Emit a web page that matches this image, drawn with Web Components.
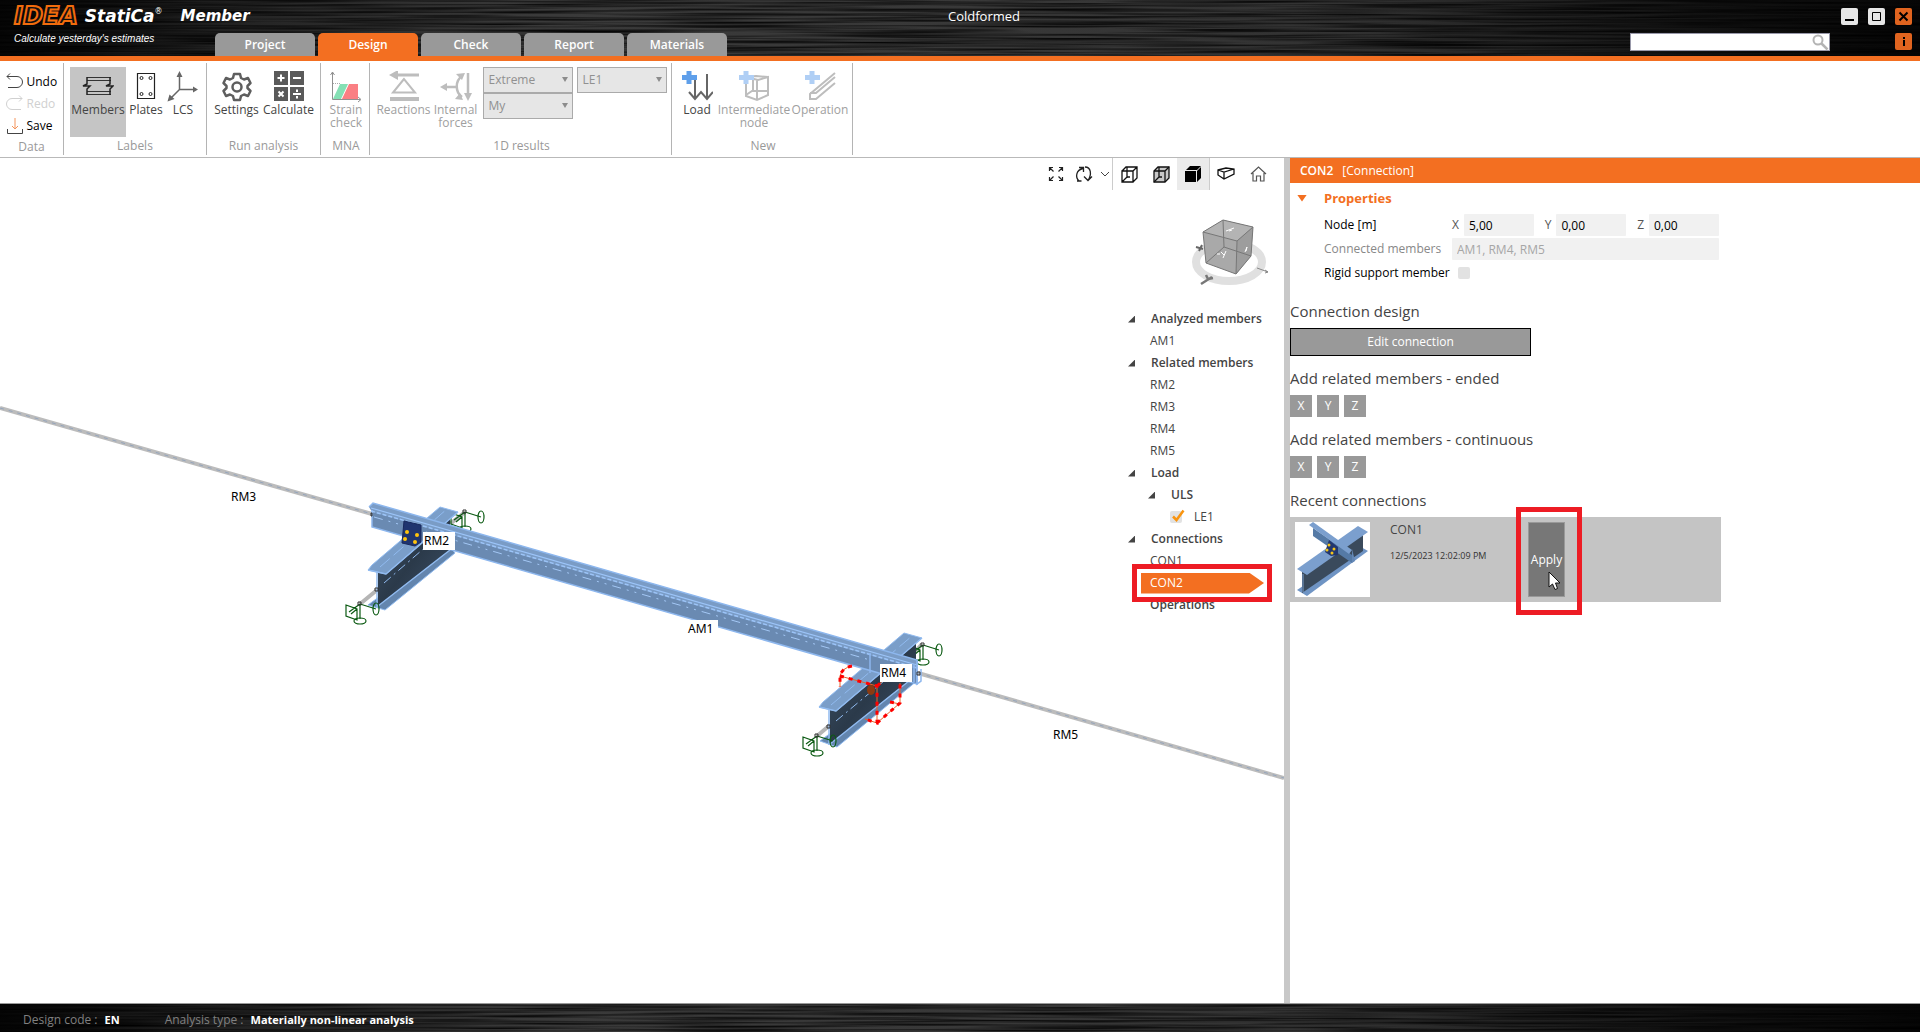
<!DOCTYPE html>
<html lang="en">
<head>
<meta charset="utf-8">
<title>IDEA StatiCa Member - Coldformed</title>
<style>
  html, body { height: 100%; }
  body { margin: 0; background: #fff; color: #444; font: 12px/16px "Open Sans", "Noto Sans", sans-serif; }
</style>
</head>
<body>
<member-app></member-app>

<script>
const define = (name, html, setup) => {
  const template = document.createElement('template');
  template.innerHTML = '<style>*{box-sizing:border-box}button,input,select{font:inherit;color:inherit;margin:0;padding:0;border:0;background:none;border-radius:0}button{cursor:pointer}</style>' + html;
  customElements.define(name, class extends HTMLElement {
    constructor() {
      super();
      this.attachShadow({ mode: 'open' }).append(template.content.cloneNode(true));
    }
    connectedCallback() { if (setup) setup(this, this.shadowRoot); }
  });
};

/* Brushed dark metal surface behind the title and status bars */
define('brushed-metal', `
<style>
  :host { display: block; position: relative; background: linear-gradient(90deg, #060606, #232323 12%, #3a3a3a 28%, #383838 52%, #323232 70%, #141414 88%, #060606); }
  svg { position: absolute; inset: 0; width: 100%; height: 100%; }
  .content { position: relative; }
</style>
<svg aria-hidden="true">
  <filter id="grain" x="0" y="0" width="100%" height="100%">
    <feTurbulence type="fractalNoise" baseFrequency="0.006 0.43" numOctaves="2" seed="8"/>
    <feColorMatrix values="0 0 0 0 0  0 0 0 0 0  0 0 0 0 0  0 0 0 1.8 -0.6"/>
  </filter>
  <rect width="100%" height="100%" filter="url(#grain)"/>
</svg>
<div class="content"><slot></slot></div>`);

define('app-logo', `
<style>
  :host { display: block; padding: 4px 0 0 14px; white-space: nowrap; color: #fff; font-family: "DejaVu Sans", sans-serif; font-style: italic; }
  .names { display: flex; align-items: center; height: 24px; }
  .idea { font-size: 24px; font-weight: 700; color: #111; -webkit-text-stroke: 2px #f26c0d; margin-right: 7px; }
  .statica { font-size: 17px; font-weight: 700; }
  sup { font-size: 8px; font-weight: 400; align-self: flex-start; font-style: normal; line-height: 16px; }
  .product { font-size: 15px; font-weight: 700; margin-left: 18px; }
  .tagline { font: italic 10px/12px "Liberation Sans", sans-serif; margin-top: 5px; }
</style>
<div class="names"><span class="idea">IDEA</span><span class="statica">StatiCa</span><sup>®</sup><span class="product">Member</span></div>
<div class="tagline">Calculate yesterday's estimates</div>`);

define('title-bar', `
<style>
  :host { display: block; flex: none; border-bottom: 5px solid #f36f21; color: #fff; }
  .bar { display: grid; grid-template: 33px 23px / 215px 1fr 167px; }
  app-logo { grid-row: 1 / 3; }
  h1 { margin: 0; font: inherit; text-align: center; padding-top: 8px; font-size: 13px; }
  .window { display: flex; justify-content: flex-end; gap: 10px; padding: 8px 8px 0 0; }
  .square { width: 17px; height: 17px; border-radius: 2px; background: #e6e6e6; flex: none; }
  .square svg { display: block; }
  .orange { background: #e0641f; }
  nav { grid-column: 2 / 4; display: flex; align-items: flex-start; padding-right: 8px; gap: 3px; }
  nav a { width: 100px; height: 23px; border-radius: 5px 5px 0 0; background: #999; color: #fff; font-weight: 600; text-align: center; text-decoration: none; line-height: 23px; }
  nav a[aria-current] { background: #f36f21; }
  .search { display: flex; width: 200px; height: 18px; margin: 0 62px 0 auto; background: #fff; border: 1px solid #99a; color: #333; }
  .search input { flex: 1; min-width: 0; outline: 0; }
  .search button { width: 18px; height: 16px; }
</style>
<brushed-metal><div class="bar">
  <app-logo></app-logo>
  <h1>Coldformed</h1>
  <div class="window">
    <button class="square" aria-label="Minimize"><svg width="17" height="17"><path d="M4 12h9" stroke="#000" stroke-width="2"/></svg></button>
    <button class="square" aria-label="Maximize"><svg width="17" height="17"><path d="M4.500 4.500h8v8h-8z" fill="none" stroke="#000"/></svg></button>
    <button class="square orange" aria-label="Close"><svg width="17" height="17"><path d="M4.500 4.500l8 8m0-8l-8 8" stroke="#000" stroke-width="2"/></svg></button>
  </div>
  <nav>
    <a href="#project">Project</a><a href="#design" aria-current="page">Design</a><a href="#check">Check</a><a href="#report">Report</a><a href="#materials">Materials</a>
    <div class="search"><input type="search" aria-label="Search"><button aria-label="Find"><svg width="17" height="16"><circle cx="6" cy="6" r="4.500" fill="none" stroke="#b4b4b4" stroke-width="2"/><path d="M9.500 9.500l6 6" stroke="#b4b4b4" stroke-width="2.500"/></svg></button></div>
    <button class="square orange" aria-label="About"><svg width="17" height="17"><path d="M9 4v2m0 1v6" stroke="#000" stroke-width="2"/></svg></button>
  </nav>
</div></brushed-metal>`);

define('ribbon-group', `
<style>
  :host { display: flex; flex-direction: column; align-items: center; height: 92px; border-right: 1px solid #b4b4b4; }
  .items { display: flex; height: 71px; margin-top: 4px; }
  .caption { color: #999; white-space: nowrap; }
  :host([stacked]) .items { flex-direction: column; height: 68px; margin-top: 8px; }
</style>
<div class="items"><slot></slot></div><div class="caption"></div>`,
(el, root) => { root.querySelector('.caption').textContent = el.getAttribute('caption'); });

define('ribbon-button', `
<style>
  :host { display: block; }
  button { display: flex; flex-direction: column; align-items: center; width: 100%; height: 70px; padding-top: 4px; text-align: center; color: #444; line-height: 13px; }
  ::slotted(svg) { display: block; flex: none; }
  .label { display: block; white-space: nowrap; }
  :host([active]) button { background: #c5c5c5; }
  button:disabled { color: #a0a0a0; cursor: default; }
</style>
<button><slot></slot><span class="label"><slot name="label"></slot></span></button>`,
(el, root) => { root.querySelector('button').disabled = el.hasAttribute('disabled'); });

define('file-button', `
<style>
  :host { display: block; }
  button { display: flex; align-items: center; gap: 3px; height: 22px; color: #000; width: 62px; padding-left: 5px; }
  button:disabled { color: #d0d0d0; }
</style>
<button><slot></slot></button>`,
(el, root) => { root.querySelector('button').disabled = el.hasAttribute('disabled'); });

define('ribbon-bar', `
<style>
  :host { display: flex; flex: none; height: 97px; padding-top: 2px; border-bottom: 1px solid #b9b9b9; background: #fff; }
  .data { width: 64px; } .labels { width: 143px; } .run { width: 114px; } .mna { width: 49px; } .results { width: 302px; } .new { width: 181px; }
  .mna, .results, .new { padding-left: 2px; }
  .w34 { width: 34px; } .w40 { width: 40px; } .w48 { width: 50px; } .w54 { width: 54px; } .w56 { width: 56px; } .w74 { width: 74px; } .w58 { width: 58px; }
  .mna .w48 { width: 46px; }
  .pick { position: relative; width: 90px; height: 26px; }
  .pick select { appearance: none; width: 100%; height: 26px; padding: 0 5px; background: #e6e6e6; border: 1px solid #aaa; color: #909090; opacity: 1; }
  .pick::after { content: ""; position: absolute; right: 5px; top: 10px; border: 3px solid transparent; border-top: 5px solid #8c8c8c; border-bottom: 0; pointer-events: none; }
  .picks { display: grid; grid-template-columns: 90px 90px; column-gap: 4px; align-content: start; margin-left: 2px; }
</style>
<ribbon-group class="data" caption="Data" stacked>
  <file-button><svg width="18" height="18" fill="none" stroke="#444"><path d="M1 3.500h10a5 5 0 0 1 0 11H2M4 .500l-3 3 3 3"/></svg>Undo</file-button>
  <file-button disabled><svg width="18" height="18" fill="none" stroke="#d0d0d0"><path d="M16 3.500H6a5 5 0 0 0 0 11h9M13 .500l3 3-3 3"/></svg>Redo</file-button>
  <file-button><svg width="18" height="18" fill="none"><path d="M1.500 12v4.500h15V12" stroke="#444"/><path d="M9 1v11M6 9l3 3 3-3" stroke="#f4955c"/></svg>Save</file-button>
</ribbon-group>
<ribbon-group class="labels" caption="Labels">
  <ribbon-button class="w56" active><svg width="32" height="32" fill="none" stroke="#222"><path d="M5 6.500h24M5 9.500h24M5 20.500h24M5 23.500h24" stroke="#333"/><path d="M5 6v7l-4 2h7l-3 3v6M28 6v7l-4 2h7l-3 3v6" stroke-width="1.500"/></svg><span slot="label">Members</span></ribbon-button>
  <ribbon-button class="w40"><svg width="32" height="32" fill="none" stroke="#222"><path d="M7.500 2.500h17v25h-17z" stroke-width="1.200"/><circle cx="11.500" cy="7" r="1.500"/><circle cx="20.500" cy="7" r="1.500"/><circle cx="11.500" cy="23" r="1.500"/><circle cx="20.500" cy="23" r="1.500"/></svg><span slot="label">Plates</span></ribbon-button>
  <ribbon-button class="w34"><svg width="32" height="32" fill="none" stroke="#666" stroke-width="1.500"><path d="M12.500 4v14.500H29M12.500 18.500L3 28"/><path d="M12.500 0l3 6h-6zM31 18.500l-5-3v6zM.500 30.500l2-7 5 4.500z" fill="#666" stroke="none"/></svg><span slot="label">LCS</span></ribbon-button>
</ribbon-group>
<ribbon-group class="run" caption="Run analysis">
  <ribbon-button class="w48"><svg width="32" height="32" viewBox="0 0 32 32" fill="none" stroke="#5e5e5e" stroke-width="2.500" stroke-linejoin="round"><path d="M13 3h6l1 4 3 1.500 4-1.500 2.500 5-3 3v2l3 3-2.500 5-4-1.500-3 1.500-1 4h-6l-1-4-3-1.500L5 25l-2.500-5 3-3v-2l-3-3L5 7l4 1.500L12 7z"/><circle cx="16" cy="16" r="4.500"/></svg><span slot="label">Settings</span></ribbon-button>
  <ribbon-button class="w54"><svg width="32" height="32"><path d="M1 0h14v14H1zM17 0h14v14H17zM1 16h14v14H1zM17 16h14v14H17z" fill="#5a5a5a"/><path d="M4.500 7h7M8 3.500v7M20 7h8M5.500 20.500l5 5m0-5l-5 5M20 23h8M24 18.500v2.500M24 25v2.500" stroke="#fff" stroke-width="2"/></svg><span slot="label">Calculate</span></ribbon-button>
</ribbon-group>
<ribbon-group class="mna" caption="MNA">
  <ribbon-button class="w48" disabled><svg width="32" height="32" fill="none"><path d="M3 28l7-15h8l-7 15z" fill="#84e0b4"/><path d="M12 28l7-15h9v15z" fill="#fa7f83"/><path d="M2.500 1v27.500H30M.500 4l2-3 2 3M28 26l3 2.500-3 2.500" stroke="#909090"/><path d="M3 12.500h8" stroke="#aaa" stroke-dasharray="1 1"/></svg><span slot="label">Strain<br>check</span></ribbon-button>
</ribbon-group>
<ribbon-group class="results" caption="1D results">
  <ribbon-button class="w54" disabled><svg width="32" height="32" fill="none" stroke="#bdbdbd"><path d="M9 4h22" stroke-width="3"/><path d="M1 4l9-5v10z" fill="#bdbdbd" stroke="none"/><path d="M16 8L5 21.500h22z" stroke-width="2"/><path d="M2 28h29" stroke-width="4"/></svg><span slot="label">Reactions</span></ribbon-button>
  <ribbon-button class="w48" disabled><svg width="32" height="32" fill="none" stroke="#bdbdbd" stroke-width="2.500"><path d="M5 16h13M28 2v22M22 5c-7 5-7 16 0 21"/><path d="M0 16l7-4v8zM28 30l-4-8h8zM25 2l-9 1 6 6zM23 29l-8-1 5-6z" fill="#bdbdbd" stroke="none"/></svg><span slot="label">Internal<br>forces</span></ribbon-button>
  <div class="picks">
    <div class="pick"><select aria-label="Result extreme" disabled><option>Extreme</option></select></div>
    <div class="pick"><select aria-label="Load effect" disabled><option>LE1</option></select></div>
    <div class="pick"><select aria-label="Result component" disabled><option>My</option></select></div>
  </div>
</ribbon-group>
<ribbon-group class="new" caption="New">
  <ribbon-button class="w40"><svg width="32" height="32" fill="none" stroke="#666" stroke-width="2"><path d="M14 5v23M26 3v25M8 21l6 7 6-7 6 7 6-7"/><path d="M8-1v14M1 6.500h15" stroke="#5f9fea" stroke-width="5"/></svg><span slot="label">Load</span></ribbon-button>
  <ribbon-button class="w74" disabled><svg width="32" height="32" fill="none" stroke="#bdbdbd" stroke-width="2"><path d="M8 6l12 3 10-3v18l-11 5-11-4zM19 9v20M8 24l6-4h15M15 6v14M8 6l10-1 12 1"/><path d="M8-1v14M1 6.500h15" stroke="#b0cff5" stroke-width="5"/></svg><span slot="label">Intermediate<br>node</span></ribbon-button>
  <ribbon-button class="w58" disabled><svg width="32" height="32" fill="none" stroke="#bdbdbd" stroke-width="2"><path d="M31 2L6 23v5l6 0 19-16M31 6L12 22H6"/><path d="M8-1v14M1 6.500h15" stroke="#b0cff5" stroke-width="5"/></svg><span slot="label">Operation</span></ribbon-button>
</ribbon-group>`);

/* One line of the structure tree */
define('tree-item', `
<style>
  :host { display: flex; align-items: center; height: 22px; position: relative; white-space: nowrap; }
  :host([level="1"]) { padding-left: 20px; }
  .arrow { width: 7px; height: 7px; margin-right: 15px; background: #444; clip-path: polygon(100% 0, 100% 100%, 0 100%); visibility: hidden; }
  :host([branch]) .arrow { visibility: visible; margin-right: 16px; }
  :host([branch]) { font-weight: 600; }
  .text { color: inherit; text-decoration: none; }
  :host([selected]) { color: #fff; z-index: 2; }
  :host([selected])::before { content: ""; position: absolute; left: 13px; width: 123px; height: 21px; background: #f36f21; clip-path: polygon(0 0, 108px 0, 100% 50%, 108px 100%, 0 100%); }
  :host([selected]) .text { position: relative; }
</style>
<button class="arrow" aria-label="Collapse"></button><slot name="box"></slot><a class="text" href="#item"><slot></slot></a>`);

define('check-mark', `
<style>
  :host { display: block; position: relative; width: 12px; height: 12px; margin-right: 12px; }
  input { appearance: none; display: block; width: 12px; height: 12px; border-radius: 2px; background: #e2e2e2; }
  svg { position: absolute; left: 2px; top: -2px; pointer-events: none; }
</style>
<input type="checkbox" aria-label="Use load effect LE1" checked>
<svg width="13" height="13" fill="none"><path d="M1 7.500l3.500 3.500L11.500 1.500" stroke="#f9940f" stroke-width="2.500"/></svg>`);

define('structure-tree', `
<style>
  :host { display: block; position: relative; }
  .frame { position: absolute; left: 4px; top: 256px; width: 140px; height: 38px; border: 5px solid #ed1c24; background: #fff; background-clip: padding-box; z-index: 1; }
  .ops { font-weight: 600; }
</style>
<tree-item branch>Analyzed members</tree-item>
<tree-item>AM1</tree-item>
<tree-item branch>Related members</tree-item>
<tree-item>RM2</tree-item><tree-item>RM3</tree-item><tree-item>RM4</tree-item><tree-item>RM5</tree-item>
<tree-item branch>Load</tree-item>
<tree-item branch level="1">ULS</tree-item>
<tree-item level="1"><check-mark slot="box"></check-mark>LE1</tree-item>
<tree-item branch>Connections</tree-item>
<tree-item>CON1</tree-item>
<tree-item selected>CON2</tree-item>
<tree-item class="ops">Operations</tree-item>
<div class="frame"></div>`);

define('view-toolbar', `
<style>
  :host { display: flex; justify-content: flex-end; padding-right: 10px; height: 32px; }
  button { width: 32px; height: 32px; display: grid; place-items: center; }
  .narrow { width: 14px; } .mid { width: 28px; }
  .on { background: #ebebeb; }
  i { width: 1px; background: #ccc; }
  svg { display: block; }
</style>
<button class="mid" aria-label="Zoom to fit"><svg width="16" height="16" fill="none" stroke="#222" stroke-width="1.200"><path d="M1.500 5V1.500H5M1.500 1.500l4 4M11 1.500h3.500V5M14.500 1.500l-4 4M1.500 11v3.500H5M1.500 14.500l4-4M11 14.500h3.500V11M14.500 14.500l-4-4"/></svg></button>
<button class="mid" aria-label="Rotate view"><svg width="18" height="16" fill="none" stroke="#222" stroke-width="1.300"><path d="M4 15C0 11 1 4 8 2.500M4 1.500h4.500V6M10 1c6 0 7 7 3 13.500M9 10.500l4 4 4-4M2 15h4.500"/></svg></button>
<button class="narrow" aria-label="More view options"><svg width="10" height="8" fill="none" stroke="#444"><path d="M1 2l4 4 4-4"/></svg></button>
<i></i>
<button aria-label="Wireframe"><svg width="17" height="17" fill="none" stroke="#111" stroke-width="1.300"><path d="M1 5h11v11H1zM1 5l4-4h11v11l-4 4M12 5l4-4M6 1v10M6 11h3M1 16l5-5"/></svg></button>
<button aria-label="Transparent"><svg width="17" height="17" fill="none" stroke="#111" stroke-width="1.300"><path d="M1 5l4-4h11v11l-4 4H1z" fill="#c8c8c8"/><path d="M1 5h11v11M12 5l4-4M6 1v10M6 11h3M1 16l5-5"/></svg></button>
<button class="on" aria-label="Solid"><svg width="17" height="17"><path d="M0 5h11v11H0zM1 4l4-4h11l-4 4zM12 5l4-4v11l-4 4z"/></svg></button>
<i></i>
<button aria-label="Section"><svg width="18" height="14" fill="none" stroke="#111" stroke-width="1.300"><path d="M1 3l8-2 8 1v5l-10 5-6-4zM1 3l6 2 10-3M7 5v7"/></svg></button>
<button aria-label="Home view"><svg width="17" height="16" fill="none" stroke="#555" stroke-width="1.200"><path d="M1 8l7.500-7L16 8M3 7v8h3.500v-5h4v5H14V7"/></svg></button>`);

/* 3D scene: drawn on a 1284 x 845 free canvas whose origin lies at y = 158 */
define('model-canvas', `
<style>
  :host { display: block; position: relative; flex: 1284; min-width: 0; overflow: hidden; background: #fff; }
  .scene { position: absolute; left: 0; top: 0; }
  .side { position: relative; display: flex; flex-direction: column; align-items: flex-end; }
  .cube { margin: 24px 8px 20px 0; }
  structure-tree { width: 156px; height: 308px; }
  text { font: 12px "Noto Sans", sans-serif; fill: #000; }
</style>
<svg class="scene" width="1284" height="845" viewBox="0 158 1284 845" fill="none">
  <g stroke-width="4" stroke="#bcbcbc"><path d="M0 408L372 514M918 673L1284 778"/></g>
  <g stroke="#94a5bd" stroke-dasharray="4 5"><path d="M0 408L372 514M918 673L1284 778"/></g>
  <defs>
    <linearGradient id="web" x1="0" y1="0" x2="1" y2="1"><stop stop-color="#3d5168"/><stop offset=".5" stop-color="#2b3a4a"/><stop offset="1" stop-color="#3d5068"/></linearGradient>
    <g id="support" stroke="#0b5a12" stroke-width="1.200">
      <path d="M0 0v15M0 0l16 5M-14 1l11 4v11l-11-4zM-3 5l-6 5M-11 8l11-8"/>
      <ellipse cx="0" cy="17" rx="6" ry="3"/><ellipse cx="16" cy="5" rx="3" ry="6"/>
    </g>
  </defs>
  <g stroke="#b5b5b5" stroke-width="4"><path d="M450 524l15-12M360 604l17-14M912 655l10-11M817 736l13-11"/></g>
  <use href="#support" x="465" y="512"/><use href="#support" x="923" y="645"/>
  <g stroke="#91bbf0">
    <path d="M368 605l17 5 70-57-6-8z" fill="#6385ae"/>
    <path d="M378 572v34l72-56V514z" fill="url(#web)" stroke="none"/>
    <path d="M378 606l72-56M377 571v37" stroke-width="1.500"/>
    <path d="M384 583l60-52" stroke-dasharray="9 4 2 4"/>
    <path d="M368 570l4-5 68-58 18 5-72 62z" fill="#7a9ec9"/>
    <path d="M368 570l18 4 72-62" stroke-width="1.500"/>
    <path d="M380 567l67-58" stroke-dasharray="13 5"/>
  </g>
  <g stroke="#91bbf0">
    <path d="M820 741l17 6 81-67-6-8z" fill="#6385ae"/>
    <path d="M830 710v34l86-69V640z" fill="url(#web)" stroke="none"/>
    <path d="M830 744l84-67M829 709v36" stroke-width="1.500"/>
    <path d="M836 721l60-50" stroke-dasharray="9 4 2 4"/>
    <path d="M819 707l4-5 81-69 18 5-86 73z" fill="#7a9ec9"/>
    <path d="M819 707l17 4 86-73" stroke-width="1.500"/>
    <path d="M831 705l81-69" stroke-dasharray="13 5"/>
  </g>
  <use href="#support" x="360" y="604"/><use href="#support" x="817" y="736"/>
  <path d="M372 508L917 665V684L372 527z" fill="#6a8ab2"/>
  <path d="M369 507l4-4L917 660v9L372 512z" fill="#7a9cc6"/>
  <path d="M369 507l4-4L917 660v24L372 527v-17" stroke="#8db7ee" stroke-width="1.500"/>
  <path d="M371 508L917 665" stroke="#9cc4f8" stroke-width="1.200"/>
  <path d="M371 511L917 668" stroke="#9cc4f8" stroke-dasharray="4 2" stroke-width="1.500"/>
  <path d="M374 517L870 660" stroke="#a4c8f6" stroke-dasharray="9 6 2 6 2 6"/>
  <path d="M870 653v20M917 660v24l4-3v-12M914 664v18" stroke="#8db7ee" stroke-width="1.500"/>
  <path d="M404 521l17 4v17l-6 4-13-3z" fill="#20356f" stroke="#18295c"/>
  <g fill="#ffc40c"><circle cx="407" cy="532" r="2"/><circle cx="417" cy="535" r="2"/><circle cx="405" cy="539" r="2"/><circle cx="415" cy="542" r="2"/></g>
  <g stroke="#e8622a"><path d="M852 666q-10 2-12 10v11M840 676l37 10v37l-12-4M877 723l23-20v-20M890 702l10 2M877 686l7-6"/></g>
  <g stroke="#f00" stroke-width="3"><path stroke-dasharray="4 5" d="M852 666q-10 2-12 10v11M840 676l37 10v37l-12-4M877 723l23-20v-20M890 702l10 2M877 686l7-6"/></g>
  <ellipse cx="871" cy="690" rx="4" ry="5" fill="#8a3b12"/>
  <g stroke="#333"><path d="M463 510h3v3h-3zM358 602h3v3h-3zM375 588h3v3h-3zM921 643h3v3h-3zM815 734h3v3h-3zM827 725h3v3h-3zM917 672h3v3h-3zM371 513h1v3h-1z"/></g>
  <g fill="#fff"><path d="M423 532h32v18h-32zM880 664h32v18h-32zM688 620h30v17h-30z"/></g>
  <text x="231" y="501">RM3</text><text x="424" y="545">RM2</text><text x="688" y="633">AM1</text><text x="881" y="677">RM4</text><text x="1053" y="739">RM5</text>
</svg>
<div class="side">
  <view-toolbar></view-toolbar>
  <svg class="cube" width="86" height="74" viewBox="1190 214 86 74" fill="none">
    <ellipse cx="1229" cy="262" rx="33" ry="19" stroke="#e0e0e0" stroke-width="8"/>
    <path d="M1223 220l30 7-2 29-15 18-30-11-3-31z" fill="#a9a9a9"/>
    <path d="M1223 220l30 7-16 14-34-9z" fill="#b4b4b4"/><path d="M1237 241l16-14-2 29-15 18z" fill="#9d9d9d"/>
    <path d="M1223 220l30 7-16 14-34-9zM1203 232l3 31 30 11 1-33M1253 227l-2 29-15 18M1223 220l1 27-18 16M1224 247l27 9" stroke="#777"/>
    <path d="M1217 254h3m1-2l3 3m2-4l-3 7M1226 231l8-3m-5 3l3-1M1245 252l2-5-1 4" stroke="#fff"/>
    <path d="M1196 247l7 2m-1-4l-3 6" stroke="#666" stroke-width="2"/><path d="M1201 284l11-7m-6-2l2 4 5-1" stroke="#777" stroke-width="2.500"/><path d="M1257 268l11 4m-3-2l3 2-3 1" stroke="#888"/>
  </svg>
  <structure-tree></structure-tree>
</div>`);

define('axis-buttons', `
<style>
  :host { display: flex; gap: 5px; height: 22px; }
  button { width: 22px; height: 22px; background: #999; color: #fff; }
</style>
<button>X</button><button>Y</button><button>Z</button>`);

define('recent-card', `
<style>
  :host { display: flex; position: relative; width: 431px; max-width: 100%; height: 85px; padding: 5px; background: #c4c4c4; }
  .thumb { background: #fff; flex: none; }
  .info { width: 158px; padding-left: 20px; }
  .name { margin-bottom: 11px; }
  .date { font-size: 9px; line-height: 14px; color: #333; white-space: nowrap; }
  button { width: 37px; height: 75px; background: #777; border: 1px solid #999; color: #fff; }
  .frame { position: absolute; left: 226px; top: -10px; width: 66px; height: 108px; border: 5px solid #ed1c24; pointer-events: none; }
  .cursor { position: absolute; left: 258px; top: 54px; }
</style>
<svg class="thumb" width="75" height="75" fill="none">
  <path d="M2 68l10 6 61-45-7-4z" fill="#6f94c4"/><path d="M7 50v21l61-42V13z" fill="#3a4a5c"/>
  <path d="M2 47l10 6 61-43-10-6z" fill="#7b9fce"/><path d="M8 52v18" stroke="#7b9fce"/>
  <path d="M18 6l39 27v8L18 14z" fill="#557aa6"/>
  <path d="M14 3l4-3 39 28-3 4z" fill="#7b9fce"/><path d="M57 27l3 12-3 2v-9z" fill="#6488b6"/>
  <path d="M34 18l9 7v8l-7 1-6-4z" fill="#22376f"/><g fill="#f5c518"><circle cx="34" cy="23" r="1.500"/><circle cx="39" cy="27" r="1.500"/><circle cx="32" cy="28" r="1.500"/><circle cx="37" cy="31" r="1.500"/></g>
</svg>
<div class="info"><div class="name">CON1</div><div class="date">12/5/2023 12:02:09 PM</div></div>
<button>Apply</button>
<div class="frame"></div>
<svg class="cursor" width="14" height="20"><path d="M1 1v15l3.500-3L7 18.500l2.500-1L7.500 12H12z" fill="#fff" stroke="#111"/></svg>`);

define('property-panel', `
<style>
  :host { display: block; flex: 630; min-width: 0; border-left: 6px solid #c8c8c8; background: #fff; }
  .head { background: #f36f21; color: #fff; height: 25px; line-height: 25px; padding-left: 10px; display: flex; gap: 9px; }
  .head b { font-weight: 600; }
  .title { display: flex; align-items: center; height: 30px; padding-left: 7px; color: #f36f21; font-size: 13px; font-weight: 700; gap: 17px; }
  .title button { width: 10px; height: 7px; background: #f36f21; clip-path: polygon(0 0, 100% 0, 50% 100%); }
  .form { display: grid; grid-template-columns: 128px 267px; grid-auto-rows: 22px; row-gap: 2px; padding: 1px 0 0 34px; color: #000; align-items: center; }
  .axes { display: flex; justify-content: space-between; align-items: center; color: #555; }
  .axes label { display: flex; align-items: center; gap: 5px; }
  input { height: 22px; background: #f1f1f1; padding: 0 5px; border-radius: 1px; }
  .axes input { width: 70px; color: #000; }
  .wide { width: 100%; color: #a6a6a6; }
  .muted { color: #888; }
  .tick { appearance: none; width: 12px; height: 12px; margin-left: 6px; padding: 0; border-radius: 2px; background: #e2e2e2; }
  h2 { margin: 0; font: 15px/22px "Open Sans", "Noto Sans", sans-serif; color: #444; }
  .edit { display: block; width: 241px; height: 28px; background: #999; border: 1px solid #000; color: #fff; }
  section { margin-bottom: 11px; }
  section h2 { margin-bottom: 6px; }
  .design { margin-top: 16px; }
</style>
<div class="head"><b>CON2</b><span>[Connection]</span></div>
<div class="title"><button aria-label="Collapse properties"></button><span>Properties</span></div>
<div class="form">
  <span>Node [m]</span>
  <div class="axes"><label>X <input value="5,00"></label><label>Y <input value="0,00"></label><label>Z <input value="0,00"></label></div>
  <label class="muted" for="members">Connected members</label><input id="members" class="wide" value="AM1, RM4, RM5" readonly>
  <label for="rigid">Rigid support member</label><input id="rigid" class="tick" type="checkbox">
</div>
<section class="design"><h2>Connection design</h2><button class="edit">Edit connection</button></section>
<section><h2>Add related members - ended</h2><axis-buttons></axis-buttons></section>
<section><h2>Add related members - continuous</h2><axis-buttons></axis-buttons></section>
<section><h2>Recent connections</h2><recent-card></recent-card></section>`);

define('status-bar', `
<style>
  :host { display: block; flex: none; border-top: 1px solid #999; }
  dl { display: flex; margin: 0; height: 28px; align-items: center; padding: 4px 0 0 23px; white-space: nowrap; }
  dt { color: #808080; margin-right: 7px; }
  dd { margin: 0 45px 0 0; color: #fff; font-weight: 700; font-size: 11px; }
</style>
<brushed-metal><dl><dt>Design code :</dt><dd>EN</dd><dt>Analysis type :</dt><dd>Materially non-linear analysis</dd></dl></brushed-metal>`);

define('member-app', `
<style>
  :host { display: flex; flex-direction: column; height: 100vh; overflow: hidden; }
  main { display: flex; flex: 1; min-height: 0; }
</style>
<title-bar></title-bar>
<ribbon-bar></ribbon-bar>
<main><model-canvas></model-canvas><property-panel></property-panel></main>
<status-bar></status-bar>`);
</script>
</body>
</html>
